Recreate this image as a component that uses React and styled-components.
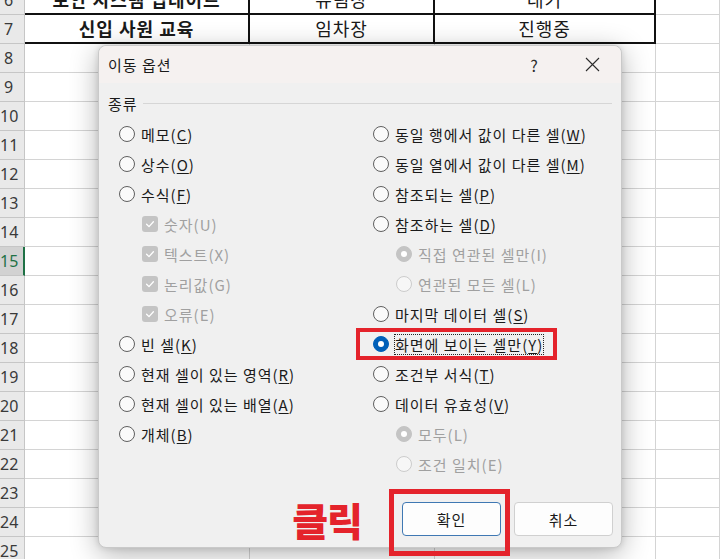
import React from 'react'
import styled, { createGlobalStyle } from 'styled-components'

const GlobalStyle = createGlobalStyle`
  html, body {
    margin: 0;
    padding: 0;
    overflow: hidden;
    background: #fff;
  }
  body {
    font-family: "Noto Sans CJK KR", "Noto Sans", sans-serif;
  }
`

const colWidths = [225, 185, 221, 64]

const tableRows = {
  6: ['보안 시스템 업데이트', '유팀장', '대기'],
  7: ['신입 사원 교육', '임차장', '진행중'],
}

const leftItems = [
  { label: '메모', key: 'C' },
  { label: '상수', key: 'O' },
  { label: '수식', key: 'F' },
  { label: '숫자', key: 'U', sub: true, check: true },
  { label: '텍스트', key: 'X', sub: true, check: true },
  { label: '논리값', key: 'G', sub: true, check: true },
  { label: '오류', key: 'E', sub: true, check: true },
  { label: '빈 셀', key: 'K' },
  { label: '현재 셀이 있는 영역', key: 'R' },
  { label: '현재 셀이 있는 배열', key: 'A' },
  { label: '개체', key: 'B' },
]

const rightItems = [
  { label: '동일 행에서 값이 다른 셀', key: 'W' },
  { label: '동일 열에서 값이 다른 셀', key: 'M' },
  { label: '참조되는 셀', key: 'P' },
  { label: '참조하는 셀', key: 'D' },
  { label: '직접 연관된 셀만', key: 'I', sub: true, checked: true },
  { label: '연관된 모든 셀', key: 'L', sub: true },
  { label: '마지막 데이터 셀', key: 'S' },
  { label: '화면에 보이는 셀만', key: 'Y', selected: true },
  { label: '조건부 서식', key: 'T' },
  { label: '데이터 유효성', key: 'V' },
  { label: '모두', key: 'L', sub: true, checked: true },
  { label: '조건 일치', key: 'E', sub: true },
]

function Option({ item }) {
  const disabled = !!item.sub
  const text = disabled ? (
    <>{item.label}({item.key})</>
  ) : (
    <>{item.label}(<u>{item.key}</u>)</>
  )
  return (
    <Item $sub={item.sub} $marked={item.selected}>
      {item.check ? (
        <CheckBox>
          <svg width="16" height="16" viewBox="0 0 16 16">
            <path d="M4.6 8.3 L7 10.6 L11.4 5.8" fill="none" stroke="#fff" strokeWidth="1.3" strokeLinecap="round" strokeLinejoin="round" />
          </svg>
        </CheckBox>
      ) : (
        <Radio $selected={item.selected} $disabled={disabled} $checked={item.checked} />
      )}
      <Label $disabled={disabled} $focused={item.selected}>{text}</Label>
    </Item>
  )
}

export default function App() {
  const rowNums = []
  for (let n = 6; n <= 25; n++) rowNums.push(n)

  return (
    <Page>
      <GlobalStyle />
      <Sheet>
        {rowNums.map((n) => {
          const data = tableRows[n]
          return (
            <Row key={n}>
              <RowHeader $active={n === 15}>{n}</RowHeader>
              {colWidths.map((w, i) => (
                <Cell key={i} $w={w} $table={!!data && i < 3} $bold={i === 0}>
                  {data && i < 3 ? data[i] : ''}
                </Cell>
              ))}
            </Row>
          )
        })}
      </Sheet>

      <Dialog>
        <TitleBar>
          <Title>이동 옵션</Title>
          <CaptionButton>?</CaptionButton>
          <CaptionButton>
            <svg width="15" height="15" viewBox="0 0 15 15">
              <path d="M1 1 L14 14 M14 1 L1 14" stroke="#2b2b2b" strokeWidth="1.1" />
            </svg>
          </CaptionButton>
        </TitleBar>
        <Body>
          <Legend>
            <span>종류</span>
          </Legend>
          <Columns>
            <Column>
              {leftItems.map((it, i) => <Option key={i} item={it} />)}
            </Column>
            <Column>
              {rightItems.map((it, i) => <Option key={i} item={it} />)}
            </Column>
          </Columns>
        </Body>
        <Footer>
          <ClickNote>클릭</ClickNote>
          <Button $primary $marked>확인</Button>
          <Button>취소</Button>
        </Footer>
      </Dialog>
    </Page>
  )
}

const Page = styled.div`
  position: relative;
  width: 720px;
  height: 559px;
  overflow: hidden;
  background: #fff;
`

const Sheet = styled.div`
  margin-top: -14px;
  display: flex;
  flex-direction: column;
`

const Row = styled.div`
  display: flex;
  height: 29px;
`

const RowHeader = styled.div`
  width: 25px;
  flex: none;
  box-sizing: border-box;
  padding-right: 7px;
  background: ${(p) => (p.$active ? '#d2d2d2' : '#e9e9e9')};
  border-right: ${(p) => (p.$active ? '2px solid #1e7145' : '1px solid #c6c6c6')};
  border-bottom: 1px solid #c6c6c6;
  color: ${(p) => (p.$active ? '#1e7145' : '#3a3a3a')};
  font-family: "Noto Sans", sans-serif;
  font-size: 16px;
  line-height: 28px;
  text-align: center;
  white-space: nowrap;
`

const Cell = styled.div`
  width: ${(p) => p.$w}px;
  flex: none;
  box-sizing: border-box;
  border-right: ${(p) => (p.$table ? '2px solid #111' : '1px solid #d4d4d4')};
  border-bottom: ${(p) => (p.$table ? '2px solid #111' : '1px solid #d4d4d4')};
  font-size: 18px;
  font-weight: ${(p) => (p.$bold ? 700 : 400)};
  letter-spacing: 1px;
  color: #1a1a1a;
  line-height: 27px;
  text-align: center;
  white-space: nowrap;
`

const Dialog = styled.div`
  position: absolute;
  left: 98px;
  top: 45px;
  width: 524px;
  height: 503px;
  box-sizing: border-box;
  display: flex;
  flex-direction: column;
  background: #f0f0f0;
  border: 1px solid #c9c9c9;
  border-radius: 8px;
  box-shadow: 0 6px 28px rgba(0, 0, 0, 0.3), 0 0 6px rgba(0, 0, 0, 0.12);
  font-family: "Noto Sans CJK KR", "Noto Sans", sans-serif;
  color: #1a1a1a;
`

const TitleBar = styled.div`
  height: 37px;
  display: flex;
  align-items: center;
  padding: 0 0 0 9px;
  background: #f5f1f0;
  border-radius: 8px 8px 0 0;
`

const Title = styled.div`
  flex: 1;
  font-size: 15px;
  letter-spacing: 1px;
`

const CaptionButton = styled.div`
  width: 58px;
  height: 37px;
  display: flex;
  align-items: center;
  justify-content: center;
  font-size: 16px;
  color: #2b2b2b;
`

const Body = styled.div`
  padding: 10px 9px 0 9px;
`

const Legend = styled.div`
  display: flex;
  align-items: center;
  height: 20px;
  font-size: 15px;
  letter-spacing: 1px;
  &::after {
    content: '';
    flex: 1;
    height: 1px;
    margin-left: 5px;
    background: #d6d6d6;
  }
`

const Columns = styled.div`
  display: grid;
  grid-template-columns: 254px 1fr;
  margin-top: 6px;
  padding-left: 11px;
`

const Column = styled.div`
  display: flex;
  flex-direction: column;
`

const Item = styled.div`
  position: relative;
  display: flex;
  align-items: center;
  gap: 6px;
  height: 30px;
  width: max-content;
  margin-left: ${(p) => (p.$sub ? '23px' : '0')};
  ${(p) =>
    p.$marked &&
    `
    &::before {
      content: '';
      position: absolute;
      left: -17px;
      top: -1px;
      width: 201px;
      bottom: -1px;
      border: 4px solid #e4232b;
      box-sizing: border-box;
    }
  `}
`

const Radio = styled.span`
  width: 16px;
  height: 16px;
  box-sizing: border-box;
  border-radius: 50%;
  flex: none;
  position: relative;
  background: ${(p) =>
    p.$selected ? '#005fb8' : p.$disabled ? (p.$checked ? '#c4c4c4' : '#f7f7f7') : '#fafafa'};
  border: 1px solid
    ${(p) => (p.$selected ? '#005fb8' : p.$disabled ? (p.$checked ? '#c4c4c4' : '#cccccc') : '#5f5f5f')};
  ${(p) =>
    (p.$selected || p.$checked) &&
    `
    &::after {
      content: '';
      position: absolute;
      left: 4px;
      top: 4px;
      width: 6px;
      height: 6px;
      border-radius: 50%;
      background: #fff;
    }
  `}
`

const CheckBox = styled.span`
  width: 16px;
  height: 16px;
  flex: none;
  border-radius: 3px;
  background: #c4c4c4;
  display: flex;
  svg {
    display: block;
  }
`

const Label = styled.span`
  font-size: 15px;
  line-height: 19px;
  letter-spacing: 1px;
  white-space: nowrap;
  color: ${(p) => (p.$disabled ? '#a0a0a0' : '#1a1a1a')};
  border: 1px dotted ${(p) => (p.$focused ? '#222' : 'transparent')};
  margin-left: -1px;
  u {
    text-underline-offset: 2px;
  }
`

const Footer = styled.div`
  margin-top: auto;
  display: flex;
  align-items: center;
  justify-content: flex-end;
  gap: 13px;
  padding: 0 8px 10px 9px;
`

const ClickNote = styled.div`
  margin-right: 27px;
  color: #e4232b;
  font-size: 39px;
  font-weight: 900;
  line-height: 36px;
  letter-spacing: -1px;
`

const Button = styled.div`
  position: relative;
  width: 99px;
  height: 34px;
  box-sizing: border-box;
  display: flex;
  align-items: center;
  justify-content: center;
  background: #fdfdfd;
  border: 1px solid ${(p) => (p.$primary ? '#3f78b3' : '#d0d0d0')};
  border-radius: 4px;
  font-size: 15px;
  letter-spacing: 1px;
  color: #1a1a1a;
  ${(p) =>
    p.$marked &&
    `
    &::after {
      content: '';
      position: absolute;
      left: -14px;
      top: -14px;
      width: 121px;
      height: 67px;
      border: 5px solid #e4232b;
      box-sizing: border-box;
    }
  `}
`
